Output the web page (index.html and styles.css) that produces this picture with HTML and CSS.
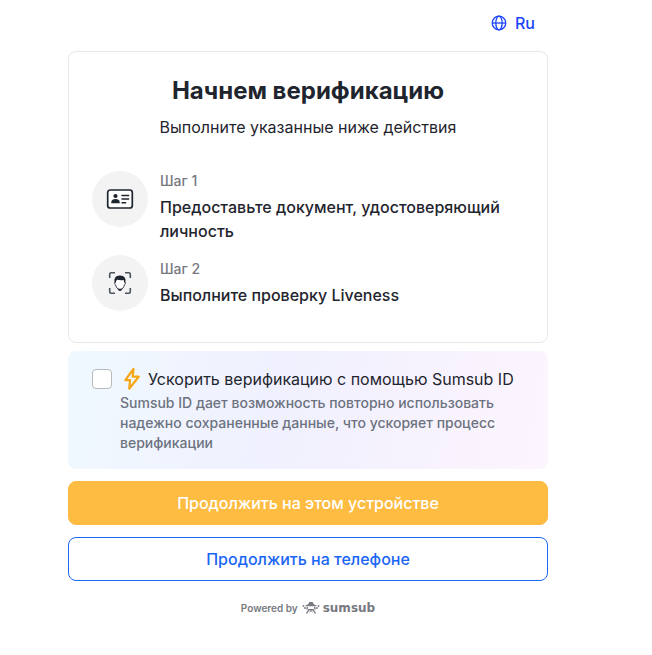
FILE: index.html
```html
<!DOCTYPE html>
<html lang="ru">
<head>
  <meta charset="UTF-8">
  <meta name="viewport" content="width=device-width, initial-scale=1.0">
  <title>Верификация</title>
  <link rel="stylesheet" href="styles.css">
</head>
<body>

  <main class="container">
    <header class="top-bar">
      <button type="button" class="lang-btn">
        <svg width="16" height="16" viewBox="0 0 16 16" fill="none" stroke="currentColor" stroke-width="1.3" aria-hidden="true">
          <circle cx="8" cy="8" r="6.8"/>
          <ellipse cx="8" cy="8" rx="3.2" ry="6.8"/>
          <path d="M1.2 8h13.6"/>
        </svg>
        Ru
      </button>
    </header>

    <section class="card">
      <h1>Начнем верификацию</h1>
      <p class="subtitle">Выполните указанные ниже действия</p>

      <ol class="steps">
        <li class="step">
          <span class="step-icon">
            <svg width="28" height="20" viewBox="0 0 28 20" aria-hidden="true">
              <rect x="1.7" y="1" width="24.6" height="18" rx="2.5" fill="#fff" stroke="#1f252e" stroke-width="1.7"/>
              <circle cx="9.5" cy="7" r="2.1" fill="#1f252e"/>
              <path d="M5.3 14.2V13c0-1.9 1.9-3 4.2-3s4.200 1.100 4.200 3v1.200z" fill="#1f252e"/>
              <path d="M16 6.400h6.600M16 10.100h6.600M16 13.700h3.600" stroke="#1f252e" stroke-width="1.5" stroke-linecap="round"/>
            </svg>
          </span>
          <div class="step-text">
            <span class="step-label">Шаг 1</span>
            <span class="step-title">Предоставьте документ, удостоверяющий личность</span>
          </div>
        </li>
        <li class="step">
          <span class="step-icon">
            <svg width="24" height="24" viewBox="0 0 24 24" aria-hidden="true">
              <path d="M1.700 7V3.200a1.500 1.500 0 0 1 1.500-1.500H7M17 1.700h3.800a1.500 1.500 0 0 1 1.500 1.500V7M22.300 17v3.800a1.500 1.500 0 0 1-1.500 1.500H17M7 22.300H3.200a1.500 1.500 0 0 1-1.500-1.500V17" fill="none" stroke="#4b525b" stroke-width="1.600"/>
              <path d="M7.300 11c-1.100.1-.9 2.400.3 2.800.6 2.600 2.400 5.100 4.400 5.100s3.800-2.500 4.400-5.100c1.200-.4 1.400-2.700.3-2.800V8H7.300z" fill="#fff" stroke="#1f252e" stroke-width=".9"/>
              <path d="M6.900 11.800C5.700 7.700 7.300 4.500 11.900 4.500c4.700 0 6.400 3 5.200 7.300h-.7l-.7-2.800c-2.600.5-5 .2-6.600-.6-.8 1-1.200 2-1.300 3.400z" fill="#1f252e"/>
              <path d="M9.400 17.200l1.900.6h1.400l1.900-.6-1.400 2.500h-2.400z" fill="#1f252e"/>
            </svg>
          </span>
          <div class="step-text">
            <span class="step-label">Шаг 2</span>
            <span class="step-title">Выполните проверку Liveness</span>
          </div>
        </li>
      </ol>
    </section>

    <section class="speed-up">
      <input type="checkbox" id="sumsubId" class="checkbox" aria-describedby="sumsubIdInfo">
      <div class="speed-up-text">
        <label for="sumsubId" class="speed-up-title">
          <svg width="24" height="24" viewBox="0 0 24 24" fill="none" stroke="#f5a614" stroke-width="2.2" stroke-linejoin="round" aria-hidden="true">
            <path d="M13.500 2L5.300 13.200h4.800L9.200 21.700 18.700 9.700h-6z"/>
          </svg>
          Ускорить верификацию с помощью Sumsub ID
        </label>
        <p id="sumsubIdInfo" class="speed-up-info">Sumsub ID дает возможность повторно использовать надежно сохраненные данные, что ускоряет процесс верификации</p>
      </div>
    </section>

    <div class="actions">
      <button type="button" class="btn btn-primary">Продолжить на этом устройстве</button>
      <button type="button" class="btn btn-outline">Продолжить на телефоне</button>
    </div>

    <footer class="powered">
      <span>Powered by</span>
      <a href="#" class="brand">
        <svg width="18" height="14" viewBox="0 0 18 14" fill="currentColor" aria-hidden="true">
          <path d="M6 3.400L7.400 1h3.200L12 3.400l2.400.9v.9H3.600v-.9z"/>
          <path d="M5.500 6L4.800 8.500M12.500 6l.7 2.500M7.300 8L4.500 12.500M10.700 8l2.800 4.500M7 8.700h4" fill="none" stroke="currentColor" stroke-width="1.400"/>
          <path d="M7.500 11L9 9.600l1.500 1.400" fill="none" stroke="currentColor"/>
          <circle cx="1.500" cy="5" r=".9"/>
          <circle cx="3" cy="7" r=".9"/>
          <circle cx="16.500" cy="5" r=".9"/>
          <circle cx="15" cy="7" r=".9"/>
        </svg>
        sumsub
      </a>
    </footer>
  </main>

</body>
</html>
```

FILE: styles.css
```css
* {
  box-sizing: border-box;
}
body {
  margin: 0;
  padding: 0 52px 0 16px;
  background-color: #fff;
  color: #1f252e;
  font-family: Inter, "Noto Sans", sans-serif;
  font-size: 16px;
  line-height: 24px;
}
.container {
  max-width: 480px;
  margin: 0 auto;
}
h1, p, ol {
  margin: 0;
  padding: 0;
}
button {
  font: inherit;
  cursor: pointer;
}

/* Language */
.top-bar {
  display: flex;
  justify-content: flex-end;
  padding: 11px 13px 16px;
}
.lang-btn {
  display: flex;
  align-items: center;
  gap: 8px;
  padding: 0;
  border: none;
  background: none;
  color: #1b45fa;
  font-weight: 500;
}

/* Steps card */
.card {
  padding: 23px 23px 31px;
  border: 1px solid #e6e7e9;
  border-radius: 8px;
}
h1 {
  font-size: 24px;
  line-height: 32px;
  font-weight: 700;
  text-align: center;
}
.subtitle {
  margin-top: 8px;
  text-align: center;
}
.steps {
  display: flex;
  flex-direction: column;
  gap: 12px;
  margin-top: 32px;
  list-style: none;
}
.step {
  display: flex;
  gap: 12px;
}
.step-icon {
  display: flex;
  align-items: center;
  justify-content: center;
  flex: none;
  width: 56px;
  height: 56px;
  border-radius: 50%;
  background-color: #f3f3f3;
}
.step-text {
  display: flex;
  flex-direction: column;
  justify-content: center;
  gap: 4px;
}
.step-label {
  color: #76797f;
  font-size: 14px;
  line-height: 20px;
  font-weight: 500;
}
.step-title {
  font-weight: 500;
}

/* Sumsub ID */
.speed-up {
  display: flex;
  gap: 8px;
  margin-top: 8px;
  padding: 16px 24px;
  border-radius: 8px;
  background: linear-gradient(100deg, #f0f9ff, #f0f0fe 45%, #fdf5fe);
}
.checkbox {
  appearance: none;
  flex: none;
  width: 20px;
  height: 20px;
  margin: 2px 0;
  border: 1px solid #b7b9bd;
  border-radius: 4px;
  background-color: #fff;
}
.checkbox:checked {
  border-color: #1b66f5;
  background-color: #1b66f5;
}
.speed-up-title {
  display: flex;
  align-items: center;
  gap: 4px;
}
.speed-up-info {
  margin-top: 2px;
  color: #6c727f;
  font-size: 14px;
  line-height: 20px;
  font-weight: 500;
}

/* Buttons */
.actions {
  display: flex;
  flex-direction: column;
  gap: 12px;
  margin-top: 12px;
}
.btn {
  padding: 9px 16px;
  border: 1px solid;
  border-radius: 8px;
  font-weight: 500;
}
.btn-primary {
  border-color: #ffbc42;
  background-color: #ffbc42;
  color: #fff;
}
.btn-outline {
  border-color: #1b66f5;
  background-color: #fff;
  color: #1b66f5;
}

/* Footer */
.powered {
  display: flex;
  align-items: center;
  justify-content: center;
  gap: 4px;
  padding: 15px 0;
  color: #76797f;
  font-size: 10px;
  font-weight: 600;
}
.brand {
  display: flex;
  align-items: center;
  gap: 3px;
  color: inherit;
  font-family: "DejaVu Sans", sans-serif;
  font-size: 12px;
  font-weight: 700;
  text-decoration: none;
}
```
